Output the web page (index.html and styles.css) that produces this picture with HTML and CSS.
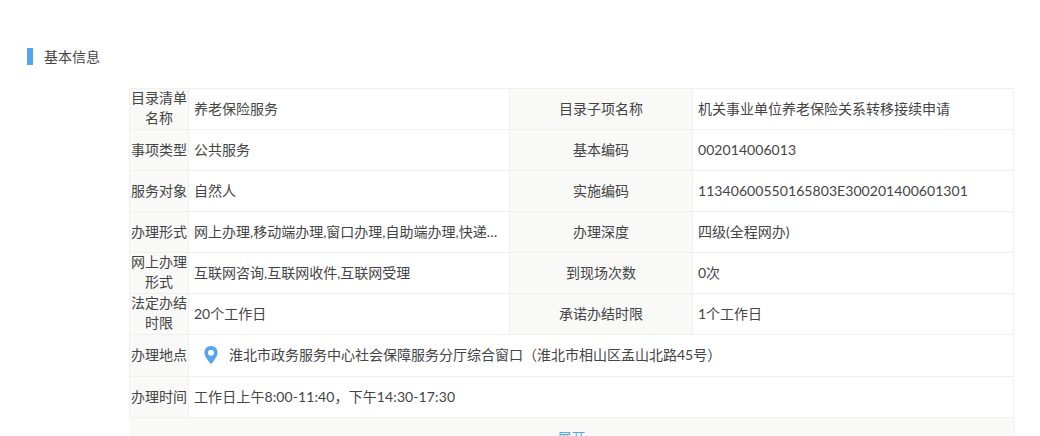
FILE: index.html
```html
<!DOCTYPE html>
<html lang="zh-CN">
<head>
<meta charset="utf-8">
<title>基本信息</title>
<link rel="stylesheet" href="styles.css">
</head>
<body>
<section class="section">
  <h2 class="section-title">基本信息</h2>
  <div class="info">
    <table class="info-table">
      <colgroup>
        <col class="col-label"><col class="col-value"><col class="col-label2"><col class="col-value2">
      </colgroup>
      <tbody>
        <tr><th class="wrap"><div>目录清单名称</div></th><td>养老保险服务</td><th>目录子项名称</th><td>机关事业单位养老保险关系转移接续申请</td></tr>
        <tr><th>事项类型</th><td>公共服务</td><th>基本编码</th><td class="code">002014006013</td></tr>
        <tr><th>服务对象</th><td>自然人</td><th>实施编码</th><td class="code">11340600550165803E300201400601301</td></tr>
        <tr><th>办理形式</th><td><div class="ellipsis">网上办理,移动端办理,窗口办理,自助端办理,快递收件,快递送达</div></td><th>办理深度</th><td>四级(全程网办)</td></tr>
        <tr><th class="wrap"><div>网上办理形式</div></th><td>互联网咨询,互联网收件,互联网受理</td><th>到现场次数</th><td>0次</td></tr>
        <tr><th class="wrap"><div>法定办结时限</div></th><td>20个工作日</td><th>承诺办结时限</th><td>1个工作日</td></tr>
        <tr class="row-address"><th>办理地点</th><td colspan="3"><div class="address">
          <svg class="pin" viewBox="0 0 14 18" width="14" height="18" aria-hidden="true"><path fill="#55a5ee" fill-rule="evenodd" d="M7 0C3.100 0 .4 2.900.4 6.500.4 10.600 4.600 15.300 7 18c2.400-2.700 6.600-7.400 6.600-11.500C13.600 2.900 10.900 0 7 0zm0 3.700a3 3 0 1 1 0 6 3 3 0 0 1 0-6z"/></svg>
          <span>淮北市政务服务中心社会保障服务分厅综合窗口（淮北市相山区孟山北路45号）</span>
        </div></td></tr>
        <tr><th>办理时间</th><td colspan="3" class="time">工作日上午8:00-11:40，下午14:30-17:30</td></tr>
      </tbody>
    </table>
    <div class="expand">展开</div>
  </div>
</section>
</body>
</html>
```
FILE: styles.css
```css
html, body {
  margin: 0;
  height: 436px;
  overflow: hidden;
  background: #fff;
}
body {
  font-family: "Lato", "Noto Sans CJK SC", "Liberation Sans", sans-serif;
  font-size: 14px;
  color: #444;
}
.section {
  padding: 48px 26px 0 27px;
}
.section-title {
  margin: 0;
  height: 17px;
  padding-left: 11px;
  border-left: 6px solid #55a5ee;
  font-size: 14px;
  font-weight: 400;
  line-height: 17px;
}
.info {
  margin: 23px 0 0 102px;
  width: 886px;
}
.info-table {
  width: 885px;
  table-layout: fixed;
  border-collapse: collapse;
}
.col-label { width: 59px; }
.col-value { width: 321px; }
.col-label2 { width: 183px; }
.col-value2 { width: 321px; }
.info-table th,
.info-table td {
  height: 41px;
  padding: 0 0 1px;
  box-sizing: border-box;
  border: 1px solid #f0f0f0;
  font-weight: 400;
  line-height: 20px;
  vertical-align: middle;
}
.info-table th {
  background: #f9f9f7;
  text-align: center;
}
.info-table td {
  padding: 0 5px 1px;
}
.info-table th.wrap {
  padding-bottom: 0;
}
.wrap div {
  margin-top: -2px;
}
.info-table .code {
  letter-spacing: .06px;
}
.info-table .time {
  letter-spacing: .1px;
}
.info-table .row-address th,
.info-table .row-address td {
  height: 42px;
  padding-bottom: 2px;
}
.ellipsis {
  overflow: hidden;
  white-space: nowrap;
  text-overflow: ellipsis;
}
.address {
  display: flex;
  align-items: center;
  gap: 11px;
  padding-left: 10px;
}
.pin {
  flex: none;
}
.expand {
  height: 19px;
  border-right: 1px solid #f0f0f0;
  background: #f9f9f7;
  color: #55a5ee;
  line-height: 40px;
  text-align: center;
  overflow: hidden;
}
```
